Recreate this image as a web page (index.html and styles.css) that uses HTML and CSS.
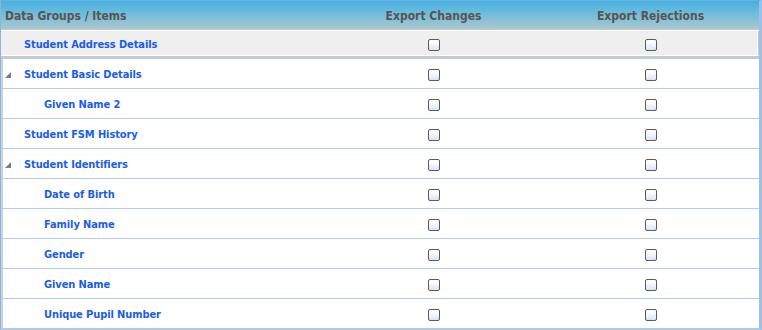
FILE: index.html
```html
<!DOCTYPE html>
<html lang="en">
<head>
    <meta charset="UTF-8">
    <title>Export Settings</title>
    <link rel="stylesheet" href="styles.css">
</head>
<body>
    <div class="grid">
        <table>
            <colgroup>
                <col class="col-name">
                <col class="col-check">
                <col class="col-check">
            </colgroup>
            <thead>
                <tr>
                    <th class="name">Data Groups / Items</th>
                    <th>Export Changes</th>
                    <th>Export Rejections</th>
                </tr>
            </thead>
            <tbody>
                <tr class="selected">
                    <td class="name"><span class="item group">Student Address Details</span></td>
                    <td><span class="check"></span></td>
                    <td><span class="check"></span></td>
                </tr>
                <tr>
                    <td class="name"><span class="expander"></span><span class="item group">Student Basic Details</span></td>
                    <td><span class="check"></span></td>
                    <td><span class="check"></span></td>
                </tr>
                <tr>
                    <td class="name"><span class="item child">Given Name 2</span></td>
                    <td><span class="check"></span></td>
                    <td><span class="check"></span></td>
                </tr>
                <tr>
                    <td class="name"><span class="item group">Student FSM History</span></td>
                    <td><span class="check"></span></td>
                    <td><span class="check"></span></td>
                </tr>
                <tr>
                    <td class="name"><span class="expander"></span><span class="item group">Student Identifiers</span></td>
                    <td><span class="check"></span></td>
                    <td><span class="check"></span></td>
                </tr>
                <tr>
                    <td class="name"><span class="item child">Date of Birth</span></td>
                    <td><span class="check"></span></td>
                    <td><span class="check"></span></td>
                </tr>
                <tr>
                    <td class="name"><span class="item child">Family Name</span></td>
                    <td><span class="check"></span></td>
                    <td><span class="check"></span></td>
                </tr>
                <tr>
                    <td class="name"><span class="item child">Gender</span></td>
                    <td><span class="check"></span></td>
                    <td><span class="check"></span></td>
                </tr>
                <tr>
                    <td class="name"><span class="item child">Given Name</span></td>
                    <td><span class="check"></span></td>
                    <td><span class="check"></span></td>
                </tr>
                <tr>
                    <td class="name"><span class="item child">Unique Pupil Number</span></td>
                    <td><span class="check"></span></td>
                    <td><span class="check"></span></td>
                </tr>
            </tbody>
        </table>
    </div>
</body>
</html>
```

FILE: styles.css
```css
body {
    margin: 0;
    background: #fff;
    font-family: Tahoma, "DejaVu Sans Condensed", "DejaVu Sans", sans-serif;
    font-stretch: condensed;
}
.grid {
    width: 762px;
    height: 330px;
    box-sizing: border-box;
    border-top: 1px solid #6aaee0;
    border-left: 1px solid #8fb3dc;
    border-right: 3px solid #9cc0ea;
    border-bottom: 1px solid #a9cbef;
    box-shadow: inset 2px 0 0 #c7d3e0;
}
table {
    width: 758px;
    border-collapse: collapse;
    table-layout: fixed;
}
.col-name {
    width: 324px;
}
.col-check {
    width: 217px;
}
th {
    height: 28px;
    padding: 2px 0 0 0;
    box-sizing: border-box;
    font-size: 12px;
    font-weight: bold;
    color: #555;
    text-align: center;
    background: linear-gradient(to bottom, #45b1e2, #a9c8cf);
}
th.name {
    text-align: left;
    padding-left: 4px;
}
td {
    height: 29px;
    padding: 0;
    text-align: center;
    border-bottom: 1px solid #abcdef;
}
td.name {
    text-align: left;
    position: relative;
    padding-bottom: 2px;
    box-sizing: border-box;
}
.item {
    font-size: 11px;
    font-weight: bold;
    color: #1a5de8;
    letter-spacing: -0.1px;
}
.group {
    padding-left: 23px;
}
.child {
    padding-left: 43px;
}
.expander {
    position: absolute;
    left: 4px;
    top: 13px;
    width: 0;
    height: 0;
    border-left: 6px solid transparent;
    border-bottom: 6px solid #6d7f99;
}
.check {
    display: inline-block;
    width: 10px;
    height: 10px;
    border: 1px solid #5b5b5b;
    border-radius: 2px;
    background: linear-gradient(to bottom, #fff 20%, #d8e4f3);
    vertical-align: middle;
}
.selected td {
    background: #efefef;
    box-shadow: inset 0 1px 0 #c9c9c9, inset 0 2px 0 #fff, inset 0 -2px 0 #c9c9c9, inset 0 -3px 0 #fff;
}
.selected td:last-child {
    box-shadow: inset 0 1px 0 #c9c9c9, inset 0 2px 0 #fff, inset 0 -2px 0 #c9c9c9, inset 0 -3px 0 #fff, inset -1px 0 0 #c9c9c9, inset -2px 0 0 #fff;
}
```
